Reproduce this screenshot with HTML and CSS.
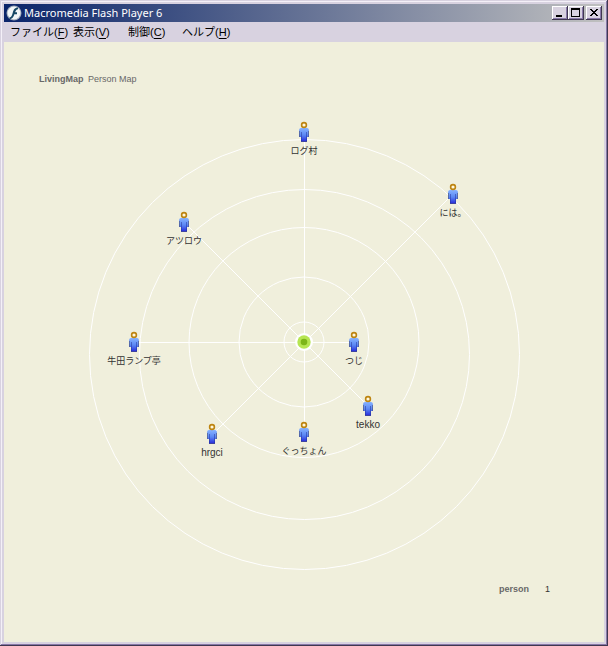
FILE: index.html
```html
<!DOCTYPE html>
<html lang="ja">
<head>
<meta charset="utf-8">
<title>Macromedia Flash Player 6</title>
<link rel="stylesheet" href="styles.css">
</head>
<body>
<div class="window">
  <header class="titlebar">
    <svg class="app-icon" viewBox="0 0 16 16" aria-hidden="true">
      <circle cx="8" cy="8" r="7.500" fill="#9ba6b8"/>
      <circle cx="8" cy="8" r="6.500" fill="#f1f5f8"/>
      <path d="M12 2.500C8.500 2.500 7.500 5 6.800 7.500C6 10.500 5.500 12 3.500 12.500V14C7 14 7.700 11 8.400 9.200H11V7.200H9.200C9.700 5.500 10.400 4.500 12 4.300Z" fill="#164765"/>
    </svg>
    <h1 class="title">Macromedia Flash Player 6</h1>
    <div class="controls">
      <button class="control" type="button" aria-label="最小化"><svg viewBox="0 0 14 12" shape-rendering="crispEdges"><path d="M3 8H9V10H3Z"/></svg></button>
      <button class="control" type="button" aria-label="最大化"><svg viewBox="0 0 14 12" shape-rendering="crispEdges"><path fill-rule="evenodd" d="M2 1H11V10H2ZM3 3V9H10V3Z"/></svg></button>
      <button class="control close" type="button" aria-label="閉じる"><svg viewBox="0 0 14 12" shape-rendering="crispEdges"><path d="M3 2h2v1h1v1h2v-1h1v-1h2v1h-1v1h-1v1h-1v1h1v1h1v1h1v1h-2v-1h-1v-1h-2v1h-1v1h-2v-1h1v-1h1v-1h1v-1h-1v-1h-1v-1h-1z"/></svg></button>
    </div>
  </header>
  <nav class="menu">
    <button type="button">ファイル(<u>F</u>)</button>
    <button type="button">表示(<u>V</u>)</button>
    <button type="button">制御(<u>C</u>)</button>
    <button type="button">ヘルプ(<u>H</u>)</button>
  </nav>
  <main class="stage">
    <h2 class="heading"><b>LivingMap</b> <span>Person Map</span></h2>
    <div class="map">
      <svg class="rings" viewBox="0 0 440 440" aria-hidden="true">
        <g fill="none" stroke="#fff" stroke-width="1">
          <circle cx="220.500" cy="220.500" r="215"/>
          <circle cx="220.500" cy="220.500" r="165"/>
          <circle cx="220" cy="208.500" r="115"/>
          <circle cx="220" cy="208" r="65"/>
          <circle cx="220" cy="208" r="20"/>
          <path d="M220.500 208.500V-2M220.500 208.500L369 60M220.500 208.500H270M220.500 208.500L284 272M220.500 208.500V298M220.500 208.500L128 301M220.500 208.500H50M220.500 208.500L100 88"/>
        </g>
        <circle cx="220" cy="208" r="9" fill="#fff"/>
        <circle cx="220" cy="208" r="6.700" fill="#b6e552"/>
        <circle cx="220" cy="208" r="3.300" fill="#7cb518"/>
      </svg>
      <svg class="defs" aria-hidden="true">
        <defs>
          <linearGradient id="body" x1="0" y1="0" x2="0" y2="1"><stop offset="0" stop-color="#86b2ff"/><stop offset=".5" stop-color="#5b88f4"/><stop offset="1" stop-color="#2424d8"/></linearGradient>
          <symbol id="person" viewBox="0 0 12 22">
            <path d="M3 7H9Q11 7 11 10V16H9V21H3V16H1V10Q1 7 3 7Z" fill="url(#body)"/>
            <path d="M1.500 10V16M10.500 10V16M3 20.500H9" fill="none" stroke="#4c5478" stroke-opacity=".6"/>
            <path d="M3.500 11V20M8.500 11V20" fill="none" stroke="#202f96" stroke-opacity=".5"/>
            <circle cx="6" cy="4" r="2.400" fill="#fff7dc" stroke="#bd8410" stroke-width="1.600"/>
          </symbol>
        </defs>
      </svg>
      <a class="person p1" href="#p1" id="p1"><svg><use href="#person"/></svg><span>ログ村</span></a>
      <a class="person p2" href="#p2" id="p2"><svg><use href="#person"/></svg><span>には。</span></a>
      <a class="person p3" href="#p3" id="p3"><svg><use href="#person"/></svg><span>アツロウ</span></a>
      <a class="person p4" href="#p4" id="p4"><svg><use href="#person"/></svg><span>牛田ランプ亭</span></a>
      <a class="person p5" href="#p5" id="p5"><svg><use href="#person"/></svg><span>つじ</span></a>
      <a class="person latin p6" href="#p6" id="p6"><svg><use href="#person"/></svg><span>tekko</span></a>
      <a class="person p7" href="#p7" id="p7"><svg><use href="#person"/></svg><span>ぐっちょん</span></a>
      <a class="person latin p8" href="#p8" id="p8"><svg><use href="#person"/></svg><span>hrgci</span></a>
    </div>
    <footer class="status"><b>person</b><span>1</span></footer>
  </main>
</div>
</body>
</html>
```
FILE: styles.css
```css
* { box-sizing: border-box; }
body { margin: 0; background: #d8d2e0; color: #000; font-family: "Liberation Sans", "Noto Sans CJK JP", sans-serif; }
button { font: inherit; color: inherit; border: 0; padding: 0; background: none; }
.window {
  min-height: 100vh;
  display: flex;
  flex-direction: column;
  padding: 4px;
  background: #d8d2e0;
  box-shadow: inset -1px -1px #403850, inset 1px 1px #d8d2e0, inset -2px -2px #8878a8, inset 2px 2px #f4f0f8;
}
.titlebar {
  display: flex;
  align-items: center;
  height: 18px;
  padding: 0 2px;
  background: linear-gradient(to right, #0a246a, #c0c0c0);
  color: #fff;
}
.app-icon { width: 16px; height: 16px; }
.title { flex: 1; margin: 0 0 0 2px; font: 11px/18px "Noto Sans", sans-serif; white-space: nowrap; }
.controls { display: flex; }
.control {
  width: 16px;
  height: 14px;
  background: #d8d2e0;
  color: #000;
  box-shadow: inset -1px -1px #403850, inset 1px 1px #fff, inset -2px -2px #8878a8;
}
.control svg { display: block; width: 14px; height: 12px; margin: 1px; }
.close { margin-left: 2px; }
.menu { display: grid; grid-template-columns: 63px 55px 54px auto; justify-content: start; height: 20px; padding: 0 6px; font-size: 11px; }
.menu button { line-height: 18px; text-align: left; white-space: nowrap; }
.menu u { text-underline-offset: 2px; }
.stage { flex: 1; display: flex; flex-direction: column; background: #f0efdc; }
.heading { margin: 30px 0 0 35px; color: #686868; font-size: 9px; font-weight: 400; line-height: 14px; }
.heading span { margin-left: 2px; }
.map { position: relative; width: 440px; height: 440px; margin: 48px auto 0; }
.rings { display: block; width: 440px; height: 440px; overflow: visible; }
.defs { position: absolute; width: 0; height: 0; }
.person {
  position: absolute;
  display: flex;
  flex-direction: column;
  align-items: center;
  gap: 1px;
  width: 80px;
  margin-left: -40px;
  color: #333;
  font-size: 9px;
  line-height: 14px;
  text-decoration: none;
  white-space: nowrap;
}
.latin { font-size: 10px; }
.person svg { width: 12px; height: 22px; }
.p1 { left: 220px; top: -13px; }
.p2 { left: 369px; top: 49px; }
.p3 { left: 100px; top: 77px; }
.p4 { left: 50px; top: 197px; }
.p5 { left: 270px; top: 197px; }
.p6 { left: 284px; top: 261px; }
.p7 { left: 220px; top: 287px; }
.p8 { left: 128px; top: 289px; }
.status { display: flex; justify-content: flex-end; align-items: center; gap: 16px; padding: 8px 54px 0 0; color: #686868; font-size: 9px; line-height: 14px; }
.status span { color: #333; }
```
